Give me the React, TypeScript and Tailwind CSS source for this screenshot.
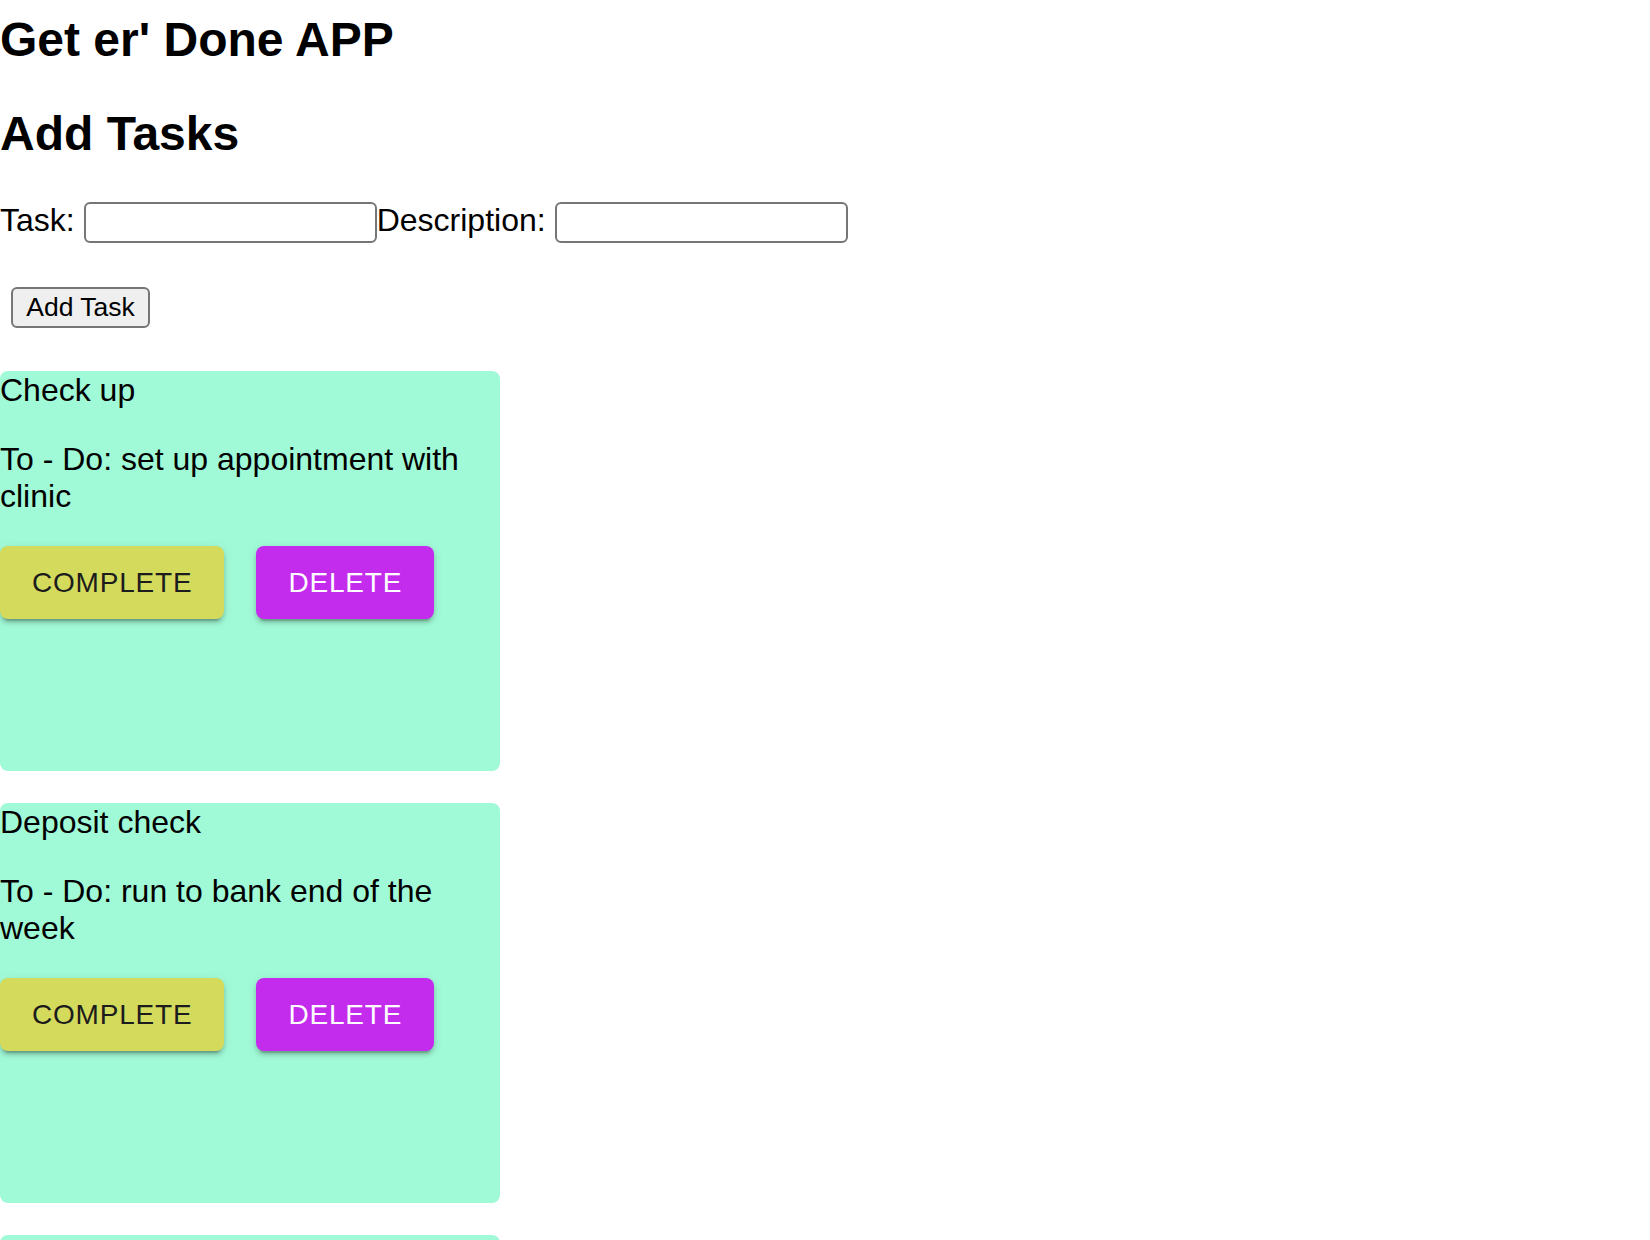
import React, { useState } from 'react';

interface Task {
  id: number;
  title: string;
  description: string;
}

const initialTasks: Task[] = [
  { id: 1, title: 'Check up', description: 'set up appointment with clinic' },
  { id: 2, title: 'Deposit check', description: 'run to bank end of the week' },
  { id: 3, title: 'Groceries', description: 'pick up milk and eggs' },
];

export default function App() {
  const [tasks, setTasks] = useState<Task[]>(initialTasks);
  const [title, setTitle] = useState('');
  const [description, setDescription] = useState('');

  const addTask = () => {
    if (!title.trim()) return;
    setTasks(prev => [...prev, { id: Date.now(), title, description }]);
    setTitle('');
    setDescription('');
  };

  const removeTask = (id: number) => {
    setTasks(prev => prev.filter(t => t.id !== id));
  };

  return (
    <div className="font-['Liberation_Sans',Arial,sans-serif] text-[32px] leading-[37px] text-black bg-white min-h-screen pt-[12px]">
      <h1 className="text-[48px] leading-[56px] font-bold">Get er' Done APP</h1>
      <h2 className="mt-[38px] text-[48px] leading-[56px] font-bold">Add Tasks</h2>

      {/* form row */}
      <div className="mt-[40px] flex items-start">
        <label htmlFor="task">Task:</label>
        <input
          id="task"
          value={title}
          onChange={e => setTitle(e.target.value)}
          className="ml-[9px] w-[293px] h-[41px] border-2 border-[#767676] rounded-[6px] bg-white px-[4px] text-[26px]"
        />
        <label htmlFor="description">Description:</label>
        <input
          id="description"
          value={description}
          onChange={e => setDescription(e.target.value)}
          className="ml-[9px] w-[293px] h-[41px] border-2 border-[#767676] rounded-[6px] bg-white px-[4px] text-[26px]"
        />
      </div>

      <button
        type="button"
        onClick={addTask}
        className="block mt-[44px] ml-[11px] w-[139px] h-[41px] border-2 border-[#767676] rounded-[6px] bg-[#efefef] text-[26.5px] leading-[37px] text-black"
      >
        Add Task
      </button>

      <div className="mt-[43px] flex flex-col gap-[32px]">
        {tasks.map(task => (
          <div key={task.id} className="w-[500px] h-[400px] shrink-0 rounded-[8px] bg-[#a1fad7] pt-[1px]">
            <p>{task.title}</p>
            <p className="mt-[32px]">To - Do: {task.description}</p>
            <div className="mt-[31px] flex">
              <button
                type="button"
                className="px-[32px] py-[12px] leading-[49px] text-[28px] tracking-[0.8px] uppercase rounded-[8px] bg-[#d3da5c] text-[#1c1c1c] shadow-[0_6px_2px_-4px_rgba(0,0,0,0.2),0_4px_4px_0_rgba(0,0,0,0.14),0_2px_10px_0_rgba(0,0,0,0.12)]"
              >
                Complete
              </button>
              <button
                type="button"
                onClick={() => removeTask(task.id)}
                className="ml-[32px] px-[32px] py-[12px] leading-[49px] text-[28px] tracking-[0.8px] uppercase rounded-[8px] bg-[#c42ced] text-white shadow-[0_6px_2px_-4px_rgba(0,0,0,0.2),0_4px_4px_0_rgba(0,0,0,0.14),0_2px_10px_0_rgba(0,0,0,0.12)]"
              >
                Delete
              </button>
            </div>
          </div>
        ))}
      </div>
    </div>
  );
}
